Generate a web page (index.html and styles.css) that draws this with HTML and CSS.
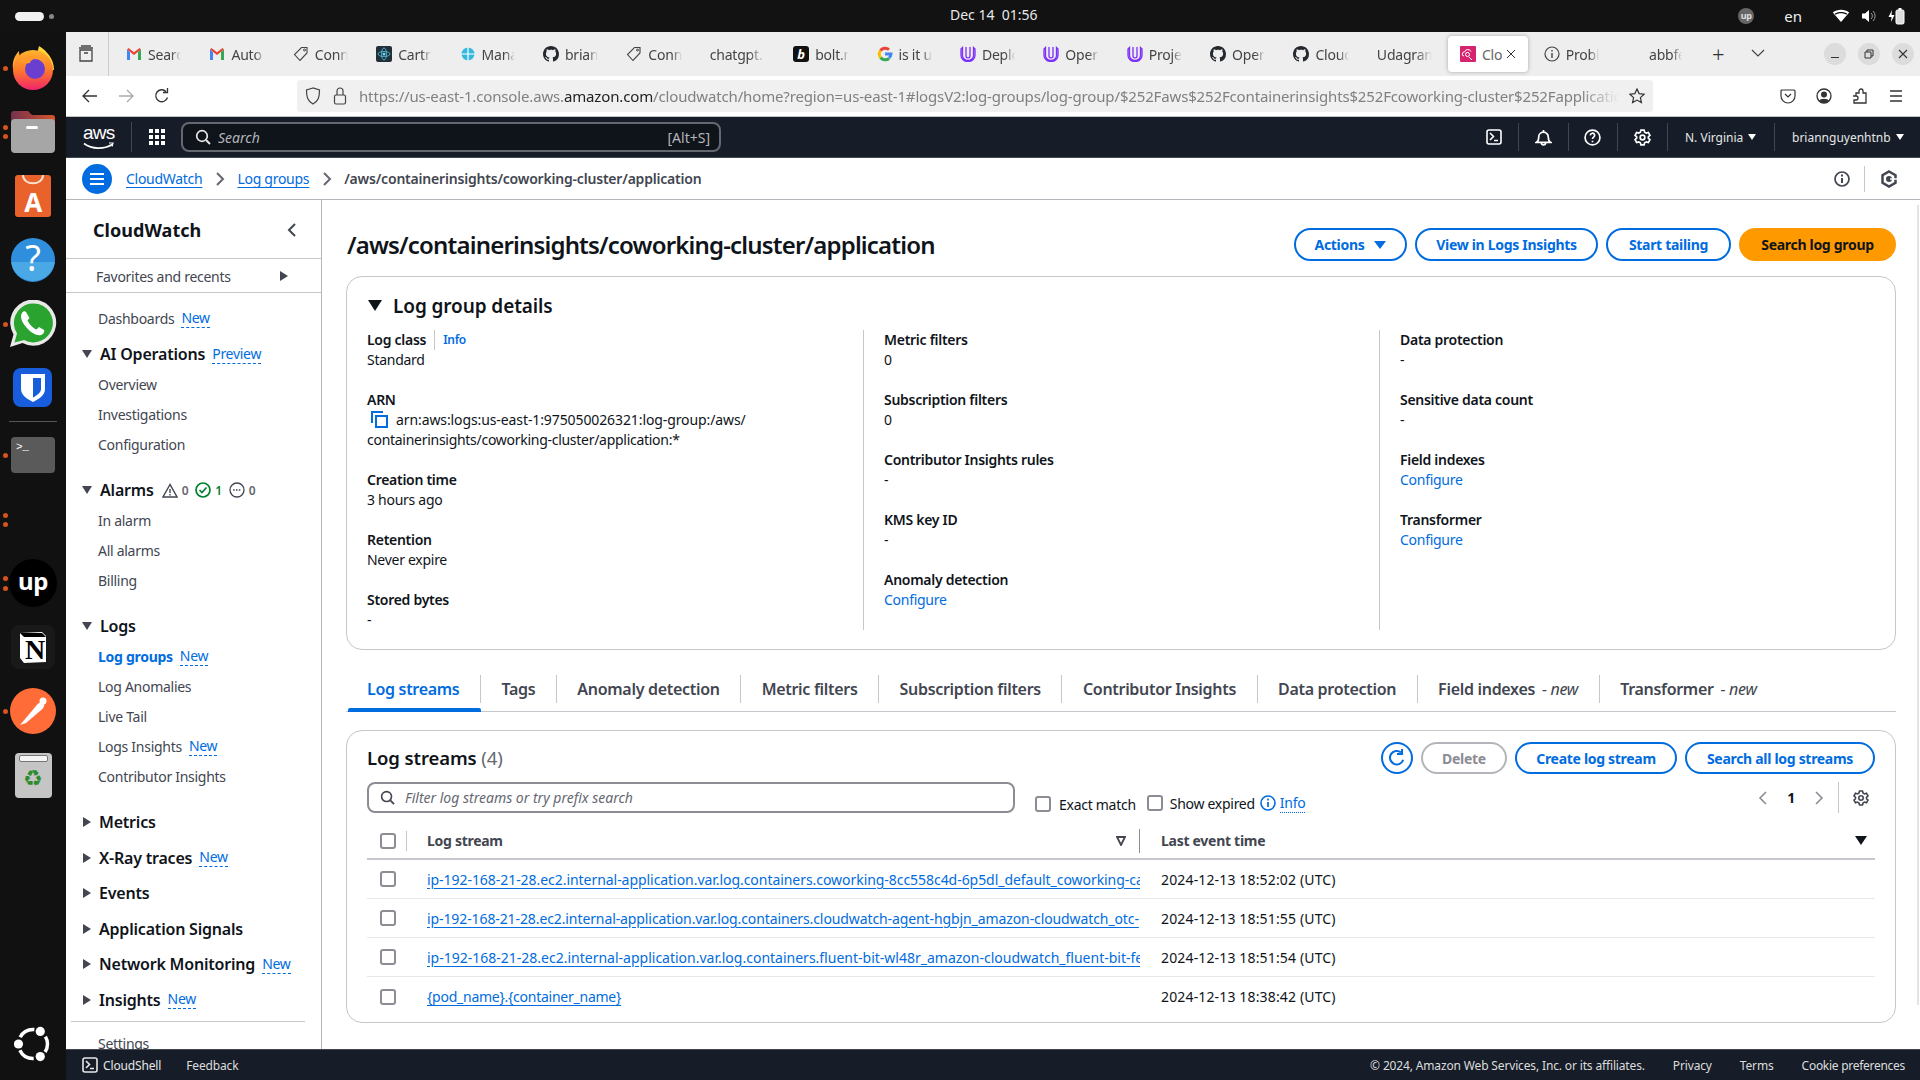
FILE: index.html
```html
<!DOCTYPE html>
<html lang="en">
<head>
<meta charset="utf-8">
<title>CloudWatch</title>
<link rel="stylesheet" href="styles.css">
</head>
<body>
<svg class="defs" width="0" height="0">
  <defs>
    <symbol id="gh" viewBox="0 0 16 16"><path fill="#24292f" d="M8 0C3.58 0 0 3.58 0 8c0 3.54 2.29 6.53 5.47 7.59.4.07.55-.17.55-.38 0-.19-.01-.82-.01-1.49-2.01.37-2.53-.49-2.69-.94-.09-.23-.48-.94-.82-1.13-.28-.15-.68-.52-.01-.53.63-.01 1.08.58 1.23.82.72 1.21 1.87.87 2.33.66.07-.52.28-.87.51-1.07-1.78-.2-3.64-.89-3.64-3.95 0-.87.31-1.59.82-2.15-.08-.2-.36-1.02.08-2.12 0 0 .67-.21 2.2.82.64-.18 1.32-.27 2-.27.68 0 1.36.09 2 .27 1.53-1.04 2.2-.82 2.2-.82.44 1.1.16 1.92.08 2.12.51.56.82 1.27.82 2.15 0 3.07-1.87 3.75-3.65 3.95.29.25.54.73.54 1.48 0 1.07-.01 1.93-.01 2.2 0 .21.15.46.55.38A8.013 8.013 0 0016 8c0-4.42-3.58-8-8-8z"/></symbol>
    <symbol id="gm" viewBox="0 0 16 16"><path fill="#ea4335" d="M1 3.500 8 9l7-5.500L13.500 2 8 6.200 2.500 2z"/><path fill="#4285f4" d="M1 3.500V14h3V6z"/><path fill="#34a853" d="M15 3.500V14h-3V6z"/></symbol>
    <symbol id="tag" viewBox="0 0 16 16"><path fill="none" stroke="#444" stroke-width="1.100" d="M8.500 1.500h5.500v5.500L7 14.500 1.500 8.500z"/><circle cx="11.500" cy="4" r="1" fill="none" stroke="#444"/></symbol>
    <symbol id="ud" viewBox="0 0 16 16"><path fill="none" stroke="#7b2ff7" stroke-width="1.300" d="M2.500 1.500 1 3v6.500a7 6 0 0 0 14 0V3l-1.500-1.500v8a5.500 5 0 0 1-11 0zM6 .9v9.100c0 2.500 4 2.500 4 0V.9"/></symbol>
    <symbol id="chev" viewBox="0 0 10 16"><path fill="none" stroke="#656871" stroke-width="2" d="m2 2 6 6-6 6"/></symbol>
    <symbol id="shell" viewBox="0 0 16 16"><rect x="1" y="1" width="14" height="14" rx="2" fill="none" stroke="currentColor" stroke-width="1.600"/><path fill="none" stroke="currentColor" stroke-width="1.600" d="m4 4 3.500 3.500L4 11M8 11.500h4"/></symbol>
    <symbol id="gear" viewBox="0 0 16 16"><path fill="none" stroke="currentColor" stroke-width="1.600" d="M6.500 1h3l.5 2 1.500.9 2-.6 1.500 2.600-1.500 1.400v1.400l1.500 1.400-1.500 2.600-2-.6-1.500.9-.5 2h-3l-.5-2-1.500-.9-2 .6L1 10.100l1.500-1.400V7.300L1 5.900l1.500-2.600 2 .6L6 3z"/><circle cx="8" cy="8" r="2.200" fill="none" stroke="currentColor" stroke-width="1.600"/></symbol>
    <symbol id="mag" viewBox="0 0 16 16"><circle cx="7" cy="7" r="5.300" fill="none" stroke="currentColor" stroke-width="1.700"/><path stroke="currentColor" stroke-width="1.900" d="m11 11 4 4"/></symbol>
  </defs>
</svg>

<header class="sysbar">
  <div class="sys-left"><span class="pill"></span><span class="pill-dot"></span></div>
  <div class="clock">Dec 14&nbsp; 01:56</div>
  <div class="sys-right">
    <span class="sys-up">up</span>
    <span class="sys-lang">en</span>
    <svg class="sys-ic" width="18" height="16" viewBox="0 0 18 16"><path fill="#fff" d="M9 14 .8 4.500C5 .8 13 .8 17.200 4.500z"/><path fill="#121212" d="M9 5.200C7 5.200 5 5.700 3.700 6.700l-1-1.100c3-2.300 9.600-2.300 12.600 0l-1 1.100C13 5.700 11 5.200 9 5.200z"/></svg>
    <svg class="sys-ic" width="16" height="16" viewBox="0 0 16 16"><path fill="#fff" d="M1 5.500h3L8 2v12l-4-3.500H1z"/><path fill="none" stroke="#999" d="M10 5a4 4 0 0 1 0 6M12 3a7 7 0 0 1 0 10"/></svg>
    <svg class="sys-ic" width="18" height="18" viewBox="0 0 18 18"><path fill="#fff" d="M4 3 .5 10h3L3 15l3.500-7h-3z"/><rect x="8" y="3" width="8" height="14" rx="1.500" fill="#ddd" stroke="#fff"/><rect x="10.500" y="1" width="3" height="2" fill="#fff"/></svg>
  </div>
</header>

<div class="desktop">
  <aside class="dock">
    <div class="dock-item"><i class="dot dot-a"></i>
      <svg width="44" height="46" viewBox="0 0 44 46"><defs><linearGradient id="ff" x1="0" y1="0" x2="0" y2="1"><stop offset="0" stop-color="#ffb52e"/><stop offset=".5" stop-color="#ff7a2b"/><stop offset="1" stop-color="#f0246c"/></linearGradient></defs><path fill="#ffd43a" d="M28 1c8 5 15 13 15 24H22z"/><path fill="#ffa92e" d="M8 6c0 4 1 6 3 8l6 10H2C1 16 4 10 8 6z"/><circle cx="22" cy="25" r="20" fill="url(#ff)"/><circle cx="24" cy="24" r="10" fill="#6a3fd0"/><path fill="#ff9a2b" d="M8 16c6-6 16-7 22-3-5-1-10 1-11 5-4 1-8 0-11-2z"/></svg>
    </div>
    <div class="dock-item"><i class="dot dot-b1"></i><i class="dot dot-b2"></i>
      <svg width="46" height="44" viewBox="0 0 46 44"><defs><linearGradient id="fd" x1="0" y1="0" x2="1" y2="0"><stop offset="0" stop-color="#74304f"/><stop offset="1" stop-color="#d8552b"/></linearGradient></defs><path fill="url(#fd)" d="M1 4q0-3 3-3h14l4 4h20q3 0 3 3v14H1z"/><rect x="1" y="9" width="44" height="34" rx="4" fill="#a6a6a6"/><rect x="16" y="16" width="12" height="3" rx="1.500" fill="#fff"/></svg>
    </div>
    <div class="dock-item">
      <svg width="38" height="44" viewBox="0 0 38 44"><rect x="1" y="1" width="36" height="42" rx="3" fill="#e9612b"/><path fill="none" stroke="#fbe1d3" stroke-width="2" d="M9 1c0 11 20 11 20 0"/><text x="19" y="38" text-anchor="middle" class="dock-a">A</text></svg>
    </div>
    <div class="dock-item">
      <svg width="46" height="46" viewBox="0 0 46 46"><circle cx="23" cy="23" r="22" fill="#2f8fdd"/><path fill="#4aa8e6" d="M1.200 25h43.600a22 22 0 0 1-43.600 0z"/><text x="23" y="34" text-anchor="middle" class="dock-q">?</text></svg>
    </div>
    <div class="dock-item"><i class="dot dot-a"></i>
      <svg width="48" height="48" viewBox="0 0 48 48"><path fill="#e9e9e9" d="M1 47l3.500-12.500A23 23 0 1 1 13.500 43z"/><path fill="#2aa32f" d="M5.500 42.500l2.500-9A19.500 19.500 0 1 1 15 40z"/><path fill="#fff" d="M17 12c-1-1-3-1-4 1-2 3-1 8 4 14s11 9 15 8c2-.5 4-3 3-5l-5-3-2.500 2.500C25 29 20 24 18.500 20.500L20.500 18z"/></svg>
    </div>
    <div class="dock-item">
      <svg width="40" height="40" viewBox="0 0 40 40"><rect width="39" height="39" rx="8" fill="#175ddc"/><path fill="#fff" d="M8 6h24v15c0 6-6 10-12 13-6-3-12-7-12-13z"/><path fill="#175ddc" d="M20 10h8v11c0 3.500-4 6.500-8 8.500z"/></svg>
    </div>
    <div class="dock-sep"></div>
    <div class="dock-item"><i class="dot dot-a"></i>
      <div class="dock-term">&gt;_</div>
    </div>
    <div class="dock-item"><i class="dot dot-c1"></i><i class="dot dot-c2"></i></div>
    <div class="dock-item"><i class="dot dot-c1b"></i><i class="dot dot-c2b"></i>
      <svg width="48" height="48" viewBox="0 0 48 48"><circle cx="24" cy="24" r="24" fill="#000"/><text x="24" y="31" text-anchor="middle" class="dock-up">up</text></svg>
    </div>
    <div class="dock-item">
      <svg width="44" height="44" viewBox="0 0 44 44"><rect width="44" height="44" rx="8" fill="#191919"/><path fill="#fff" d="m9 8 22-1 4 4v26l-22 1-4-5z"/><path fill="#000" d="M9 8h22l4 4H13z"/><text x="24" y="34" text-anchor="middle" class="dock-n">N</text></svg>
    </div>
    <div class="dock-item"><i class="dot dot-a"></i>
      <svg width="46" height="46" viewBox="0 0 46 46"><circle cx="23" cy="23" r="23" fill="#ff6c37"/><path fill="#fff" d="M10 37 26 18c2-3 6-5 8-3 1 3-1 6-4 8L16 35z"/><circle cx="33" cy="13" r="3.500" fill="#fff"/></svg>
    </div>
    <div class="dock-item">
      <div class="dock-trash"><span class="dock-trash-lid"></span><span class="dock-recycle">♻</span></div>
    </div>
    <div class="dock-item dock-bottom">
      <svg width="38" height="38" viewBox="0 0 38 38"><circle cx="19" cy="19" r="14.500" fill="none" stroke="#fff" stroke-width="3.500" stroke-dasharray="17 13.400" stroke-dashoffset="-21.900"/><circle cx="4.500" cy="19" r="4.600" fill="#fff"/><circle cx="26.250" cy="6.440" r="4.600" fill="#fff"/><circle cx="26.250" cy="31.560" r="4.600" fill="#fff"/></svg>
    </div>
  </aside>

  <div class="window">
    <div class="tabstrip">
      <div class="ffview"><svg width="18" height="18" viewBox="0 0 18 18"><path fill="none" stroke="#444" stroke-width="1.300" d="M3 5V16h12V5zM2 3h14M4 1h10M7 8h4"/></svg></div>
      <div class="tabs">
        <div class="tab"><svg class="tab-ic"><use href="#gm"/></svg><span class="tab-t">Search</span></div>
        <div class="tab"><svg class="tab-ic"><use href="#gm"/></svg><span class="tab-t">Auto</span></div>
        <div class="tab"><svg class="tab-ic"><use href="#tag"/></svg><span class="tab-t">Conn</span></div>
        <div class="tab"><svg class="tab-ic" viewBox="0 0 16 16"><rect width="16" height="16" rx="2" fill="#20303a"/><circle cx="8" cy="8" r="1.500" fill="#61dafb"/><ellipse cx="8" cy="8" rx="6" ry="2.500" fill="none" stroke="#61dafb" stroke-width=".7"/><ellipse cx="8" cy="8" rx="2.500" ry="6" fill="none" stroke="#61dafb" stroke-width=".7"/></svg><span class="tab-t">Cartr</span></div>
        <div class="tab"><svg class="tab-ic" viewBox="0 0 16 16"><circle cx="8" cy="8" r="6.500" fill="#35b8e0"/><path stroke="#fff" stroke-width="1.200" d="M8 1v14M1 8h14"/></svg><span class="tab-t">Mana</span></div>
        <div class="tab"><svg class="tab-ic"><use href="#gh"/></svg><span class="tab-t">brian</span></div>
        <div class="tab"><svg class="tab-ic"><use href="#tag"/></svg><span class="tab-t">Conn</span></div>
        <div class="tab"><span class="tab-t">chatgpt.</span></div>
        <div class="tab"><svg class="tab-ic" viewBox="0 0 16 16"><rect width="16" height="16" rx="3" fill="#111"/><text x="8" y="12.500" text-anchor="middle" class="tab-bolt">b</text></svg><span class="tab-t">bolt.n</span></div>
        <div class="tab"><svg class="tab-ic" viewBox="0 0 16 16"><path fill="none" stroke="#4285f4" stroke-width="3" d="M8 8h6a6 6 0 0 1-2 4"/><path fill="none" stroke="#34a853" stroke-width="3" d="M12 12.500a6 6 0 0 1-8.500-1"/><path fill="none" stroke="#fbbc05" stroke-width="3" d="M3.500 11.500a6 6 0 0 1 0-7"/><path fill="none" stroke="#ea4335" stroke-width="3" d="M3.500 4.500a6 6 0 0 1 8.500-.8"/></svg><span class="tab-t">is it u</span></div>
        <div class="tab"><svg class="tab-ic"><use href="#ud"/></svg><span class="tab-t">Deplo</span></div>
        <div class="tab"><svg class="tab-ic"><use href="#ud"/></svg><span class="tab-t">Oper</span></div>
        <div class="tab"><svg class="tab-ic"><use href="#ud"/></svg><span class="tab-t">Proje</span></div>
        <div class="tab"><svg class="tab-ic"><use href="#gh"/></svg><span class="tab-t">Oper</span></div>
        <div class="tab"><svg class="tab-ic"><use href="#gh"/></svg><span class="tab-t">Cloud</span></div>
        <div class="tab"><span class="tab-t">Udagram</span></div>
        <div class="tab tab-active"><svg class="tab-ic" viewBox="0 0 16 16"><rect width="16" height="16" rx="1" fill="#d6246e"/><path fill="none" stroke="#fff" d="M4 10a2 2 0 0 1 .5-4 3.500 3.500 0 0 1 6.500-.5M9 11l3 3"/><circle cx="7.500" cy="8.500" r="2" fill="none" stroke="#fff"/></svg><span class="tab-t tab-t-short">Clo</span><svg class="tab-x" width="10" height="10" viewBox="0 0 10 10"><path stroke="#333" d="m1 1 8 8M9 1l-8 8"/></svg></div>
        <div class="tab"><svg class="tab-ic" viewBox="0 0 16 16"><circle cx="8" cy="8" r="7" fill="none" stroke="#444" stroke-width="1.200"/><path stroke="#444" stroke-width="1.400" d="M8 7v5M8 4v1.600"/></svg><span class="tab-t">Probl</span></div>
        <div class="tab"><span class="tab-ic tab-blank"></span><span class="tab-t">abbfe</span></div>
      </div>
      <div class="tab-plus">+</div>
      <svg class="tab-more" width="14" height="8" viewBox="0 0 14 8"><path fill="none" stroke="#444" stroke-width="1.200" d="m1 1 6 6 6-6"/></svg>
      <div class="winbtns">
        <span class="winbtn"><svg width="10" height="10" viewBox="0 0 10 10"><path stroke="#333" d="M1 8.500h8"/></svg></span>
        <span class="winbtn"><svg width="10" height="10" viewBox="0 0 10 10"><path fill="none" stroke="#333" d="M1 3h6v6H1zM3 3V1h6v6H7"/></svg></span>
        <span class="winbtn"><svg width="10" height="10" viewBox="0 0 10 10"><path stroke="#333" stroke-width="1.100" d="m1 1 8 8M9 1l-8 8"/></svg></span>
      </div>
    </div>

    <div class="navbar">
      <div class="nav-btns">
        <svg width="16" height="16" viewBox="0 0 16 16"><path fill="none" stroke="#333" stroke-width="1.300" d="M15 8H1M7 2 1 8l6 6"/></svg>
        <svg width="16" height="16" viewBox="0 0 16 16"><path fill="none" stroke="#aaa" stroke-width="1.300" d="M1 8h14M9 2l6 6-6 6"/></svg>
        <svg width="16" height="16" viewBox="0 0 16 16"><path fill="none" stroke="#333" stroke-width="1.300" d="M13.500 9.500A6 6 0 1 1 12 3.500M9 4.500h4.500V0"/></svg>
      </div>
      <div class="urlbar">
        <svg width="16" height="18" viewBox="0 0 16 18"><path fill="none" stroke="#444" stroke-width="1.200" d="M8 1 1.500 3c0 7 1 11 6.500 14 5.500-3 6.500-7 6.500-14z"/></svg>
        <svg width="14" height="18" viewBox="0 0 14 18"><rect x="1.500" y="8" width="11" height="9" rx="1.500" fill="none" stroke="#444" stroke-width="1.200"/><path fill="none" stroke="#444" stroke-width="1.200" d="M4 8V4a3 3 0 0 1 6 0v4"/></svg>
        <span class="url"><span class="url-d">https://us-east-1.console.aws.</span>amazon.com<span class="url-d">/cloudwatch/home?region=us-east-1#logsV2:log-groups/log-group/$252Faws$252Fcontainerinsights$252Fcoworking-cluster$252Fapplication</span></span>
        <svg width="16" height="16" viewBox="0 0 16 16"><path fill="none" stroke="#333" stroke-width="1.200" d="m8 1 2.100 4.600 5 .6-3.700 3.400 1 5L8 12.100l-4.400 2.500 1-5L.9 6.200l5-.6z"/></svg>
      </div>
      <div class="nav-right">
        <svg width="16" height="16" viewBox="0 0 16 16"><path fill="none" stroke="#333" stroke-width="1.200" d="M2 2h12q1 0 1 1v5a7 7 0 0 1-14 0V3q0-1 1-1zM5 6l3 3 3-3"/></svg>
        <svg width="16" height="16" viewBox="0 0 16 16"><circle cx="8" cy="8" r="7" fill="none" stroke="#333" stroke-width="1.300"/><circle cx="8" cy="6.500" r="3" fill="#333"/><path fill="#333" d="M3 13c1-3 9-3 10 0a7 7 0 0 1-10 0z"/></svg>
        <svg width="16" height="16" viewBox="0 0 16 16"><path fill="none" stroke="#333" stroke-width="1.300" d="M1 8h3V5h3V3a2 2 0 0 1 4 0v2h3v10H2v-3h2a2 2 0 0 0 0-4z"/></svg>
        <svg width="16" height="16" viewBox="0 0 16 16"><path stroke="#333" stroke-width="1.300" d="M2 3h12M2 8h12M2 13h12"/></svg>
      </div>
    </div>

    <div class="awsbar">
      <div class="aws-logo"><span class="aws-word">aws</span><svg class="aws-smile" width="32" height="8" viewBox="0 0 32 8"><path fill="none" stroke="#fff" stroke-width="1.600" d="M1 1.500c8 6 20 6 28 1"/><path fill="none" stroke="#fff" stroke-width="1.200" d="M26 1h4l-1 3.500"/></svg></div>
      <div class="aws-grid"><svg width="16" height="16" viewBox="0 0 16 16"><path fill="#fff" d="M0 0h4v4H0zM6 0h4v4H6zM12 0h4v4h-4zM0 6h4v4H0zM6 6h4v4H6zM12 6h4v4h-4zM0 12h4v4H0zM6 12h4v4H6zM12 12h4v4h-4z"/></svg></div>
      <div class="aws-search"><svg class="mag-w"><use href="#mag"/></svg><span class="aws-ph">Search</span><span class="aws-kbd">[Alt+S]</span></div>
      <div class="aws-right">
        <span class="aws-cell"><svg class="ic16"><use href="#shell"/></svg></span>
        <span class="aws-cell"><svg width="17" height="17" viewBox="0 0 16 16"><path fill="none" stroke="#fff" stroke-width="1.600" d="M1.500 12.500c1.500-1 2-2.500 2-5a4.500 4.500 0 0 1 9 0c0 2.500.5 4 2 5zM6 13a2 2 0 0 0 4 0M8 1v2"/></svg></span>
        <span class="aws-cell"><svg width="17" height="17" viewBox="0 0 16 16"><circle cx="8" cy="8" r="7" fill="none" stroke="#fff" stroke-width="1.600"/><path fill="none" stroke="#fff" stroke-width="1.600" d="M6 6a2 2 0 1 1 3 1.700c-.7.500-1 .8-1 1.800M8 11v1.500"/></svg></span>
        <span class="aws-cell"><svg class="ic17"><use href="#gear"/></svg></span>
        <span class="aws-menu">N. Virginia <i class="caret-w"></i></span>
        <span class="aws-menu aws-menu-last">briannguyenhtnb <i class="caret-w"></i></span>
      </div>
    </div>

    <div class="crumbs">
      <span class="burger"><svg width="14" height="12" viewBox="0 0 14 12"><path stroke="#fff" stroke-width="2" d="M0 1h14M0 6h14M0 11h14"/></svg></span>
      <a class="crumb-link">CloudWatch</a>
      <svg class="crumb-chev"><use href="#chev"/></svg>
      <a class="crumb-link">Log groups</a>
      <svg class="crumb-chev"><use href="#chev"/></svg>
      <span class="crumb-cur">/aws/containerinsights/coworking-cluster/application</span>
      <span class="crumb-right">
        <span class="crumb-i"><svg width="16" height="16" viewBox="0 0 16 16"><circle cx="8" cy="8" r="7" fill="none" stroke="#424650" stroke-width="1.700"/><path stroke="#424650" stroke-width="2" d="M8 7v5M8 3.500v2"/></svg></span>
        <span class="crumb-i crumb-i-last"><svg width="16" height="18" viewBox="0 0 16 18"><path fill="none" stroke="#424650" stroke-width="2.500" d="m8 1.500 6.500 3.700v7.600L8 16.500l-6.500-3.700V5.200z"/><circle cx="8" cy="9" r="3" fill="#424650"/><path stroke="#fff" stroke-width="1.500" d="M9 9h7"/></svg></span>
      </span>
    </div>

    <div class="body">
      <nav class="side">
        <div class="side-head"><span class="side-title">CloudWatch</span><svg width="10" height="14" viewBox="0 0 10 14"><path fill="none" stroke="#424650" stroke-width="2" d="M8 1 2 7l6 6"/></svg></div>
        <div class="side-fav"><span>Favorites and recents</span><i class="tri-r"></i></div>
        <div class="side-list">
          <div class="side-item">Dashboards <a class="side-new">New</a></div>
          <div class="side-sec side-sec-first"><i class="tri-d"></i><span class="side-h">AI Operations</span><a class="side-new">Preview</a></div>
          <div class="side-item">Overview</div>
          <div class="side-item">Investigations</div>
          <div class="side-item">Configuration</div>
          <div class="side-sec side-sec-open"><i class="tri-d"></i><span class="side-h">Alarms</span>
            <span class="al">
              <svg width="16" height="15" viewBox="0 0 16 15"><path fill="none" stroke="#424650" stroke-width="1.400" d="M8 1.500 1 14h14zM8 6v4M8 11v1.500"/></svg><b class="al-n">0</b>
              <svg width="16" height="16" viewBox="0 0 16 16"><circle cx="8" cy="8" r="7" fill="none" stroke="#00802f" stroke-width="1.700"/><path fill="none" stroke="#00802f" stroke-width="1.700" d="m4.500 8 2.500 2.500 4.500-5"/></svg><b class="al-n al-g">1</b>
              <svg width="16" height="16" viewBox="0 0 16 16"><circle cx="8" cy="8" r="7" fill="none" stroke="#424650" stroke-width="1.300"/><path stroke="#424650" stroke-width="1.500" stroke-dasharray="1.500 1.300" d="M4.200 8h8"/></svg><b class="al-n">0</b>
            </span>
          </div>
          <div class="side-item">In alarm</div>
          <div class="side-item">All alarms</div>
          <div class="side-item">Billing</div>
          <div class="side-sec side-sec-open"><i class="tri-d"></i><span class="side-h">Logs</span></div>
          <div class="side-item side-active">Log groups <a class="side-new">New</a></div>
          <div class="side-item">Log Anomalies</div>
          <div class="side-item">Live Tail</div>
          <div class="side-item">Logs Insights <a class="side-new">New</a></div>
          <div class="side-item">Contributor Insights</div>
          <div class="side-sec side-sec-open"><i class="tri-s"></i><span class="side-h">Metrics</span></div>
          <div class="side-sec"><i class="tri-s"></i><span class="side-h">X-Ray traces</span><a class="side-new">New</a></div>
          <div class="side-sec"><i class="tri-s"></i><span class="side-h">Events</span></div>
          <div class="side-sec"><i class="tri-s"></i><span class="side-h">Application Signals</span></div>
          <div class="side-sec"><i class="tri-s"></i><span class="side-h">Network Monitoring</span><a class="side-new">New</a></div>
          <div class="side-sec"><i class="tri-s"></i><span class="side-h">Insights</span><a class="side-new">New</a></div>
          <div class="side-rule"></div>
          <div class="side-item">Settings</div>
        </div>
      </nav>

      <main class="main">
        <div class="title-row">
          <h1 class="title">/aws/containerinsights/coworking-cluster/application</h1>
          <div class="btns">
            <button class="btn btn-actions">Actions <i class="caret-b"></i></button>
            <button class="btn btn-view">View in Logs Insights</button>
            <button class="btn btn-start">Start tailing</button>
            <button class="btn btn-primary">Search log group</button>
          </div>
        </div>

        <section class="card card-details">
          <h2 class="details-h"><i class="tri-big"></i>Log group details</h2>
          <div class="cols">
            <div class="col col-1">
              <div class="kv"><div class="k">Log class<span class="k-info">Info</span></div><div class="v">Standard</div></div>
              <div class="kv kv-3"><div class="k">ARN</div><div class="v"><svg class="copy" width="17" height="17" viewBox="0 0 17 17"><path fill="none" stroke="#006ce0" stroke-width="2" d="M1 12V1h11"/><rect x="5" y="5" width="11" height="11" fill="none" stroke="#006ce0" stroke-width="2"/></svg><span class="arn-1">arn:aws:logs:us-east-1:975050026321:log-group:/aws/</span><br>containerinsights/coworking-cluster/application:*</div></div>
              <div class="kv"><div class="k">Creation time</div><div class="v">3 hours ago</div></div>
              <div class="kv"><div class="k">Retention</div><div class="v">Never expire</div></div>
              <div class="kv"><div class="k">Stored bytes</div><div class="v">-</div></div>
            </div>
            <div class="col col-2">
              <div class="kv"><div class="k">Metric filters</div><div class="v">0</div></div>
              <div class="kv"><div class="k">Subscription filters</div><div class="v">0</div></div>
              <div class="kv"><div class="k">Contributor Insights rules</div><div class="v">-</div></div>
              <div class="kv"><div class="k">KMS key ID</div><div class="v">-</div></div>
              <div class="kv"><div class="k">Anomaly detection</div><div class="v"><a class="link">Configure</a></div></div>
            </div>
            <div class="col col-3">
              <div class="kv"><div class="k">Data protection</div><div class="v">-</div></div>
              <div class="kv"><div class="k">Sensitive data count</div><div class="v">-</div></div>
              <div class="kv"><div class="k">Field indexes</div><div class="v"><a class="link">Configure</a></div></div>
              <div class="kv"><div class="k">Transformer</div><div class="v"><a class="link">Configure</a></div></div>
            </div>
          </div>
        </section>

        <div class="ptabs">
          <div class="ptab ptab-on"><span class="ptab-in">Log streams</span></div>
          <div class="ptab"><span class="ptab-in">Tags</span></div>
          <div class="ptab"><span class="ptab-in">Anomaly detection</span></div>
          <div class="ptab"><span class="ptab-in">Metric filters</span></div>
          <div class="ptab"><span class="ptab-in">Subscription filters</span></div>
          <div class="ptab"><span class="ptab-in">Contributor Insights</span></div>
          <div class="ptab"><span class="ptab-in">Data protection</span></div>
          <div class="ptab"><span class="ptab-in">Field indexes <em class="new">- new</em></span></div>
          <div class="ptab"><span class="ptab-in ptab-last">Transformer <em class="new">- new</em></span></div>
        </div>

        <section class="card card-streams">
          <div class="st-head">
            <h2 class="st-title">Log streams <span class="st-count">(4)</span></h2>
            <div class="st-btns">
              <button class="btn btn-icon"><svg width="18" height="18" viewBox="0 0 16 16"><path fill="none" stroke="#006ce0" stroke-width="1.800" d="M13.500 9.500A6 6 0 1 1 11.500 3M8 4.500h4.500V0"/></svg></button>
              <button class="btn btn-dis">Delete</button>
              <button class="btn btn-create">Create log stream</button>
              <button class="btn btn-all">Search all log streams</button>
            </div>
          </div>
          <div class="st-filter">
            <div class="st-search"><svg class="mag-g"><use href="#mag"/></svg><span>Filter log streams or try prefix search</span></div>
            <label class="chk chk-exact"><i class="box"></i>Exact match</label>
            <label class="chk chk-exp"><i class="box"></i>Show expired</label>
            <span class="st-info"><svg width="16" height="16" viewBox="0 0 16 16"><circle cx="8" cy="8" r="7" fill="none" stroke="#006ce0" stroke-width="1.600"/><path stroke="#006ce0" stroke-width="1.700" d="M8 7v5M8 3.500v2"/></svg><a class="info-l">Info</a></span>
            <div class="pager">
              <svg width="10" height="16" viewBox="0 0 10 16"><path fill="none" stroke="#8c8c94" stroke-width="1.600" d="M8 2 2 8l6 6"/></svg>
              <b class="pg-n">1</b>
              <svg width="10" height="16" viewBox="0 0 10 16"><path fill="none" stroke="#8c8c94" stroke-width="1.600" d="m2 2 6 6-6 6"/></svg>
              <span class="pg-gear"><svg class="ic16d"><use href="#gear"/></svg></span>
            </div>
          </div>
          <div class="tbl">
            <div class="tr th">
              <div class="td-c td-c-h"><i class="box"></i></div>
              <div class="td-n td-n-h">Log stream<svg class="filter" width="10" height="10" viewBox="0 0 10 10"><path fill="none" stroke="#424650" stroke-width="1.800" d="M1 1h8L5 9z"/></svg></div>
              <div class="td-t td-t-h">Last event time<i class="sort"></i></div>
            </div>
            <div class="tr">
              <div class="td-c"><i class="box"></i></div>
              <div class="td-n"><a class="row-link row-1">ip-192-168-21-28.ec2.internal-application.var.log.containers.coworking-8cc558c4d-6p5dl_default_coworking-ca</a></div>
              <div class="td-t">2024-12-13 18:52:02 (UTC)</div>
            </div>
            <div class="tr">
              <div class="td-c"><i class="box"></i></div>
              <div class="td-n"><a class="row-link row-2">ip-192-168-21-28.ec2.internal-application.var.log.containers.cloudwatch-agent-hgbjn_amazon-cloudwatch_otc-</a></div>
              <div class="td-t">2024-12-13 18:51:55 (UTC)</div>
            </div>
            <div class="tr">
              <div class="td-c"><i class="box"></i></div>
              <div class="td-n"><a class="row-link row-3">ip-192-168-21-28.ec2.internal-application.var.log.containers.fluent-bit-wl48r_amazon-cloudwatch_fluent-bit-fe</a></div>
              <div class="td-t">2024-12-13 18:51:54 (UTC)</div>
            </div>
            <div class="tr tr-last">
              <div class="td-c"><i class="box"></i></div>
              <div class="td-n"><a class="row-link row-4">{pod_name}.{container_name}</a></div>
              <div class="td-t">2024-12-13 18:38:42 (UTC)</div>
            </div>
          </div>
        </section>
        <span class="scroll-thumb"></span>
      </main>
    </div>

    <footer class="foot">
      <span class="foot-l"><svg class="ic16"><use href="#shell"/></svg>CloudShell</span>
      <span class="foot-fb">Feedback</span>
      <span class="foot-r">
        <span>© 2024, Amazon Web Services, Inc. or its affiliates.</span>
        <span>Privacy</span>
        <span>Terms</span>
        <span class="foot-cookie">Cookie preferences</span>
      </span>
    </footer>
  </div>
</div>
</body>
</html>
```

FILE: styles.css
```css
* { box-sizing: border-box; }
html, body { margin: 0; height: 1080px; overflow: hidden; }
body { font-family: "Noto Sans", sans-serif; font-size: 14px; letter-spacing: -.28px; color: #0f141a; background: #fff; display: flex; flex-direction: column; }
.defs { position: absolute; }
h1, h2 { margin: 0; }
button { font-family: inherit; letter-spacing: inherit; }

/* system bar */
.sysbar { height: 32px; background: #121212; color: #eee; display: flex; align-items: center; position: relative; flex: none; }
.sys-left { display: flex; align-items: center; gap: 5px; padding-left: 15px; }
.pill { width: 29px; height: 9px; background: #f2f2f2; border-radius: 5px; }
.pill-dot { width: 5px; height: 5px; background: #888; border-radius: 50%; }
.clock { position: absolute; left: 950px; top: 5px; width: 84px; text-align: center; font-size: 14px; line-height: 20px; letter-spacing: 0; white-space: nowrap; color: #e8e8e8; }
.sys-right { margin-left: auto; display: flex; align-items: center; padding-right: 14px; }
.sys-up { width: 16px; height: 16px; border-radius: 50%; background: #666; font-size: 9px; line-height: 16px; text-align: center; font-weight: 700; color: #ddd; margin-right: 30px; }
.sys-lang { font-size: 15px; margin-right: 19px; letter-spacing: 0; }
.sys-ic { margin-left: 11px; }

.desktop { flex: 1; display: flex; min-height: 0; }

/* dock */
.dock { width: 66px; background: #111; flex: none; display: flex; flex-direction: column; padding-top: 4px; }
.dock-item { height: 64px; flex: none; display: flex; align-items: center; justify-content: center; position: relative; }
.dock-bottom { margin-top: auto; margin-bottom: 4px; }
.dock-sep { height: 1px; background: #555; margin: 1px 9px; flex: none; }
.dot { position: absolute; left: 3px; width: 5px; height: 5px; border-radius: 50%; background: #d9531e; }
.dot-a { top: 30px; }
.dot-b1 { top: 25px; }
.dot-b2 { top: 34px; }
.dot-c1 { top: 26px; }
.dot-c2 { top: 35px; }
.dot-c1b { top: 25px; }
.dot-c2b { top: 35px; }
.dock-a { font: 700 26px "Noto Sans", sans-serif; fill: #fff; }
.dock-q { font: 400 36px "Noto Sans", sans-serif; fill: #fff; }
.dock-up { font: 700 24px "Noto Sans", sans-serif; fill: #fff; }
.dock-n { font: 700 28px "Liberation Serif", serif; fill: #000; }
.dock-term { width: 44px; height: 36px; background: #5a5a5a; border-radius: 4px; color: #fff; font: 11px/14px "Liberation Mono", monospace; padding: 3px 5px; }
.dock-trash { width: 37px; height: 45px; background: #c5c5c5; border-radius: 4px; position: relative; text-align: center; }
.dock-trash-lid { position: absolute; left: 4px; top: 2px; width: 29px; height: 7px; background: #f4f4f4; border: 1px solid #777; border-radius: 2px; }
.dock-recycle { position: absolute; left: 0; right: 0; top: 14px; color: #2e8b2e; font: 22px/24px "DejaVu Sans", sans-serif; }

/* browser */
.window { flex: 1; display: flex; flex-direction: column; min-width: 0; }
.tabstrip { height: 44px; background: #eee; display: flex; align-items: center; flex: none; position: relative; }
.ffview { width: 43px; height: 44px; border-right: 1px solid #ccc; display: flex; align-items: center; justify-content: center; flex: none; padding-right: 3px; }
.tabs { display: flex; padding-left: 3px; }
.tab { width: 83.4px; height: 36px; flex: none; padding-left: 14px; display: flex; align-items: center; gap: 6px; overflow: hidden; }
.tab-ic { width: 16px; height: 16px; flex: none; }
.tab-blank { display: block; }
.tab-bolt { font: italic 700 13px "Noto Sans", sans-serif; fill: #fff; }
.tab-t { font-size: 14px; letter-spacing: -.2px; color: #444; white-space: nowrap; overflow: hidden; flex: 1; -webkit-mask-image: linear-gradient(90deg, #000 70%, transparent 100%); mask-image: linear-gradient(90deg, #000 70%, transparent 100%); padding-right: 14px; margin-right: 14px; }
.tab-active { background: #fff; border-radius: 4px; box-shadow: 0 0 4px rgba(0, 0, 0, .3); padding-left: 12px; width: 80px; margin: 0 1.700px; gap: 6px; }
.tab-t-short { flex: none; padding-right: 0; margin-right: 0; -webkit-mask-image: none; mask-image: none; color: #666; }
.tab-x { margin-left: -2px; flex: none; }
.tab-plus { position: absolute; left: 1646px; font-size: 22px; font-weight: 300; color: #333; line-height: 44px; }
.tab-more { position: absolute; left: 1685px; top: 17px; }
.winbtns { margin-left: auto; display: flex; gap: 12px; padding-right: 6px; }
.winbtn { width: 22px; height: 22px; border-radius: 50%; background: #dcdcdc; display: flex; align-items: center; justify-content: center; }

.navbar { height: 41px; background: #fff; border-bottom: 1px solid #c4c4c4; display: flex; align-items: flex-start; flex: none; }
.nav-btns { width: 231px; padding: 12px 0 0 16px; display: flex; gap: 20px; flex: none; }
.urlbar { width: 1356px; height: 32px; margin-top: 4px; background: #f0f0f0; border-radius: 4px; display: flex; align-items: center; padding: 0 8px; gap: 12px; flex: none; }
.url { flex: 1; min-width: 0; white-space: nowrap; overflow: hidden; color: #222; font-size: 15px; letter-spacing: -.15px; -webkit-mask-image: linear-gradient(90deg, #000 97%, transparent 100%); mask-image: linear-gradient(90deg, #000 97%, transparent 100%); margin-right: -2px; }
.url-d { color: #808080; }
.nav-right { margin-left: auto; display: flex; gap: 20px; padding: 12px 16px 0 0; }

/* AWS */
.awsbar { height: 41px; background: #161d29; border-bottom: 1px solid #424650; display: flex; align-items: center; color: #fff; flex: none; }
.aws-logo { width: 66px; height: 30px; position: relative; border-right: 1px solid #424650; flex: none; }
.aws-word { position: absolute; left: 17px; top: 1px; font: 400 19px/20px "Liberation Sans", sans-serif; letter-spacing: -.8px; }
.aws-smile { position: absolute; left: 17px; top: 20px; }
.aws-grid { width: 49px; display: flex; justify-content: center; flex: none; }
.aws-search { width: 540px; height: 30px; border: 2px solid #656871; border-radius: 8px; background: #0f141a; display: flex; align-items: center; padding: 0 9px 0 12px; color: #b4b4bb; flex: none; }
.mag-w { width: 16px; height: 16px; color: #e8e8e8; flex: none; }
.aws-ph { font-style: italic; font-size: 14px; margin-left: 7px; letter-spacing: 0; }
.aws-kbd { margin-left: auto; font-size: 14px; letter-spacing: 0; }
.aws-right { margin-left: auto; display: flex; align-items: center; height: 30px; }
.aws-cell { width: 49.700px; height: 28px; border-right: 1px solid #424650; display: flex; align-items: center; justify-content: center; color: #fff; }
.ic16 { width: 16px; height: 16px; }
.ic17 { width: 17px; height: 17px; }
.aws-menu { padding: 0 8px 0 17px; height: 28px; display: flex; align-items: center; font-size: 12px; letter-spacing: 0; border-right: 1px solid #424650; color: #e6e6e6; gap: 4px; white-space: nowrap; width: 107px; }
.aws-menu-last { border-right: 0; width: 145px; }
.caret-w { display: inline-block; border: 4.500px solid transparent; border-top: 6px solid #fff; border-bottom: 0; margin-left: 1px; }

.crumbs { height: 42px; border-bottom: 1px solid #b4b4bb; display: flex; align-items: center; padding-left: 16px; flex: none; background: #fff; }
.burger { width: 30px; height: 30px; border-radius: 50%; background: #006ce0; display: flex; align-items: center; justify-content: center; margin-right: 14px; flex: none; }
.crumb-link { color: #006ce0; text-decoration: underline; text-underline-offset: 3px; font-size: 14px; }
.crumb-chev { width: 10px; height: 16px; margin: 0 12px 0 13px; flex: none; }
.crumb-cur { font-weight: 600; color: #424650; font-size: 14px; letter-spacing: -.2px; }
.crumb-right { margin-left: auto; display: flex; align-items: center; }
.crumb-i { width: 47px; height: 26px; display: flex; align-items: center; justify-content: center; }
.crumb-i:first-child { border-right: 1px solid #c6c6cd; width: 46px; }
.crumb-i-last { width: 47px; padding-left: 1px; margin-right: 8px; }

.body { flex: 1; display: flex; min-height: 0; }

/* side */
.side { width: 256px; border-right: 1px solid #b4b4bb; flex: none; overflow: hidden; background: #fff; }
.side-head { height: 59px; border-bottom: 1px solid #c6c6cd; display: flex; align-items: center; justify-content: space-between; padding: 1px 24px 0 27px; }
.side-title { font-size: 18px; font-weight: 700; letter-spacing: .05px; }
.side-fav { height: 34px; border-bottom: 1px solid #c6c6cd; display: flex; align-items: center; justify-content: space-between; padding: 1px 33px 0 30px; color: #424650; font-size: 14px; }
.tri-r, .tri-s { display: block; width: 0; height: 0; border-left: 8px solid #424650; border-top: 5px solid transparent; border-bottom: 5px solid transparent; }
.tri-d { display: block; width: 0; height: 0; border-top: 8px solid #424650; border-left: 5px solid transparent; border-right: 5px solid transparent; }
.side-list { padding-top: 10px; }
.side-item { height: 30px; display: flex; align-items: center; padding-left: 32px; color: #424650; font-size: 14px; white-space: nowrap; }
.side-new { color: #006ce0; border-bottom: 1px dashed #006ce0; line-height: 18px; margin-left: 7px; }
.side-sec { height: 30px; margin-top: 5.600px; display: flex; align-items: center; padding-left: 16px; white-space: nowrap; }
.side-sec-first { margin-top: 6px; }
.side-sec-open { margin-top: 16px; }
.side-sec i { margin-right: 8px; flex: none; }
.side-sec .tri-s { margin-left: 1px; margin-right: 8px; }
.side-h { font-size: 16px; font-weight: 600; letter-spacing: -.2px; }
.side-sec .side-new { font-size: 14px; }
.side-active { color: #006ce0; font-weight: 700; }
.side-active .side-new { font-weight: 400; }
.al { display: flex; align-items: center; margin-left: 8px; gap: 0; }
.al-n { font-size: 12px; font-weight: 600; color: #656871; margin: 0 7px 0 4px; }
.al-g { color: #00802f; }
.side-rule { height: 1px; background: #c6c6cd; margin: 6px 16px 7px 5px; }

/* main */
.main { flex: 1; min-width: 0; padding: 28px 24px 0; position: relative; overflow: hidden; }
.title-row { display: flex; align-items: center; height: 33px; }
.title { font-size: 24px; font-weight: 600; line-height: 33px; letter-spacing: -.82px; white-space: nowrap; margin-left: 1px; padding-bottom: 1px; }
.btns { margin-left: auto; display: flex; gap: 8px; }
.btn { height: 33px; border-radius: 17px; border: 2px solid #006ce0; background: #fff; color: #006ce0; font-size: 14px; font-weight: 700; letter-spacing: -.3px; padding: 0; white-space: nowrap; display: flex; align-items: center; justify-content: center; }
.btn-actions { width: 113px; gap: 8px; }
.btn-view { width: 183px; }
.btn-start { width: 125px; }
.btn-primary { width: 157px; background: #ff9900; border-color: #ff9900; color: #0f141a; }
.caret-b { display: inline-block; border: 6px solid transparent; border-top: 8px solid #006ce0; border-bottom: 0; margin-left: 2px; }
.btn-icon { width: 32px; height: 32px; border-radius: 50%; }
.btn-dis { width: 86px; height: 32px; border-color: #b4b4bb; color: #8c8c94; }
.btn-create { width: 162px; height: 32px; }
.btn-all { width: 190px; height: 32px; }

.card { border: 1px solid #c6c6cd; border-radius: 16px; background: #fff; }
.card-details { height: 374px; margin-top: 15px; padding: 0 20px; }
.details-h { font-size: 19px; font-weight: 600; letter-spacing: -.1px; height: 53px; padding-top: 4px; display: flex; align-items: center; }
.tri-big { display: block; width: 0; height: 0; border-top: 11px solid #0f141a; border-left: 7px solid transparent; border-right: 7px solid transparent; margin: 0 11px 0 1px; }
.cols { display: flex; height: 300px; }
.col { display: flex; flex-direction: column; gap: 20px; flex: none; border-right: 1px solid #c6c6cd; }
.col-1 { width: 497px; }
.col-2 { width: 516px; padding-left: 20px; }
.col-3 { flex: 1; padding-left: 20px; border-right: 0; }
.kv { font-size: 14px; line-height: 20px; }
.k { font-weight: 600; display: flex; }
.k-info { font-size: 12px; color: #006ce0; font-weight: 600; border-left: 1px solid #c6c6cd; margin-left: 8px; padding-left: 8px; }
.v { color: #0f141a; }
.copy { margin: 0 8px 0 4px; vertical-align: -3px; }
.arn-1 { letter-spacing: -.1px; }
.link { color: #006ce0; }

.ptabs { display: flex; margin-top: 20px; height: 42px; border-bottom: 1px solid #c6c6cd; padding-left: 1px; }
.ptab { position: relative; height: 41px; padding-top: 5px; }
.ptab-in { display: flex; align-items: center; height: 28px; padding: 0 20.500px; border-right: 1px solid #c6c6cd; font-size: 16px; font-weight: 600; letter-spacing: -.3px; color: #424650; white-space: pre; }
.ptab:first-child .ptab-in { padding-left: 20px; }
.ptab-last { border-right: 0; }
.ptab-on .ptab-in { color: #006ce0; }
.ptab-on::after { content: ""; position: absolute; left: 1px; right: 0; bottom: -1px; height: 4px; background: #006ce0; border-radius: 2px 2px 0 0; }
.new { font-weight: 400; font-style: italic; margin-left: 3px; }

.card-streams { height: 293px; margin-top: 18px; padding: 11px 20px 0; }
.st-head { display: flex; align-items: center; height: 32px; }
.st-title { font-size: 18.500px; font-weight: 600; letter-spacing: -.1px; padding-bottom: 2px; }
.st-count { font-weight: 400; color: #656871; }
.st-btns { margin-left: auto; display: flex; gap: 8px; }
.st-filter { display: flex; height: 31px; margin-top: 8px; position: relative; }
.st-search { width: 648px; height: 31px; border: 2px solid #8c8c94; border-radius: 8px; display: flex; align-items: center; padding-left: 11px; gap: 10px; font-style: italic; letter-spacing: 0; color: #656871; font-size: 14px; flex: none; }
.mag-g { width: 15px; height: 15px; color: #424650; flex: none; }
.box { display: block; width: 16px; height: 16px; border: 2px solid #8c8c94; border-radius: 3px; background: #fff; flex: none; }
.chk { display: flex; align-items: center; gap: 8px; font-size: 14px; color: #0f141a; padding-top: 13px; white-space: nowrap; }
.chk-exact { margin-left: 20px; }
.chk-exp { margin-left: 11px; padding-top: 11px; gap: 7px; }
.st-info { display: flex; align-items: center; padding-top: 11px; margin-left: 5px; gap: 4px; color: #006ce0; }
.info-l { border-bottom: 1px dotted #006ce0; }
.pager { margin-left: auto; display: flex; align-items: center; height: 31px; padding-right: 6px; }
.pg-n { font-size: 14px; font-weight: 700; margin: 0 19px; }
.pg-gear { border-left: 1px solid #c6c6cd; height: 31px; display: flex; align-items: center; padding-left: 14px; margin-left: 14px; color: #424650; }
.ic16d { width: 16px; height: 16px; }
.tbl { margin-top: 9px; }
.tr { display: flex; height: 39px; border-bottom: 1px solid #e8e8ec; align-items: center; }
.th { height: 38px; border-bottom: 2px solid #c6c6cd; font-weight: 700; color: #424650; padding-top: 1px; }
.tr-last { border-bottom: 0; }
.td-c { width: 60px; flex: none; padding-left: 13px; }
.td-c-h { display: flex; align-items: center; height: 24px; border: 0; position: relative; }
.td-c-h::after { content: ""; position: absolute; left: 39px; top: 2px; height: 20px; width: 1px; background: #c6c6cd; }
.td-n { width: 713px; flex: none; overflow: hidden; white-space: nowrap; }
.td-n-h { position: relative; height: 24px; line-height: 24px; border-right: 1px solid #8c8c94; overflow: visible; }
.filter { position: absolute; right: 13px; top: 7px; }
.row-link { color: #006ce0; text-decoration: underline; text-underline-offset: 3px; }
.row-1 { letter-spacing: -.05px; }
.row-2 { letter-spacing: -.1px; }
.row-3 { letter-spacing: 0; }
.row-4 { letter-spacing: -.25px; }
.td-t { flex: 1; padding-left: 21px; color: #0f141a; white-space: nowrap; letter-spacing: .15px; }
.td-t-h { display: flex; align-items: center; justify-content: space-between; padding-right: 8px; color: #424650; letter-spacing: -.28px; }
.sort { display: block; border: 6px solid transparent; border-top: 9px solid #0f141a; border-bottom: 0; }
.scroll-thumb { position: absolute; right: 1px; top: 5px; width: 2px; height: 800px; background: #e4e4e4; }

/* footer */
.foot { height: 31px; background: #161d29; color: #dcdcdc; border-top: 1px solid #424650; display: flex; align-items: center; font-size: 12px; letter-spacing: -.15px; padding-left: 16px; flex: none; }
.foot-l { display: flex; align-items: center; gap: 5px; color: #e6e6e6; }
.foot-fb { margin-left: 25px; }
.foot-r { margin-left: auto; display: flex; gap: 28px; padding-right: 15px; }
.foot-cookie { letter-spacing: -.28px; }
```
